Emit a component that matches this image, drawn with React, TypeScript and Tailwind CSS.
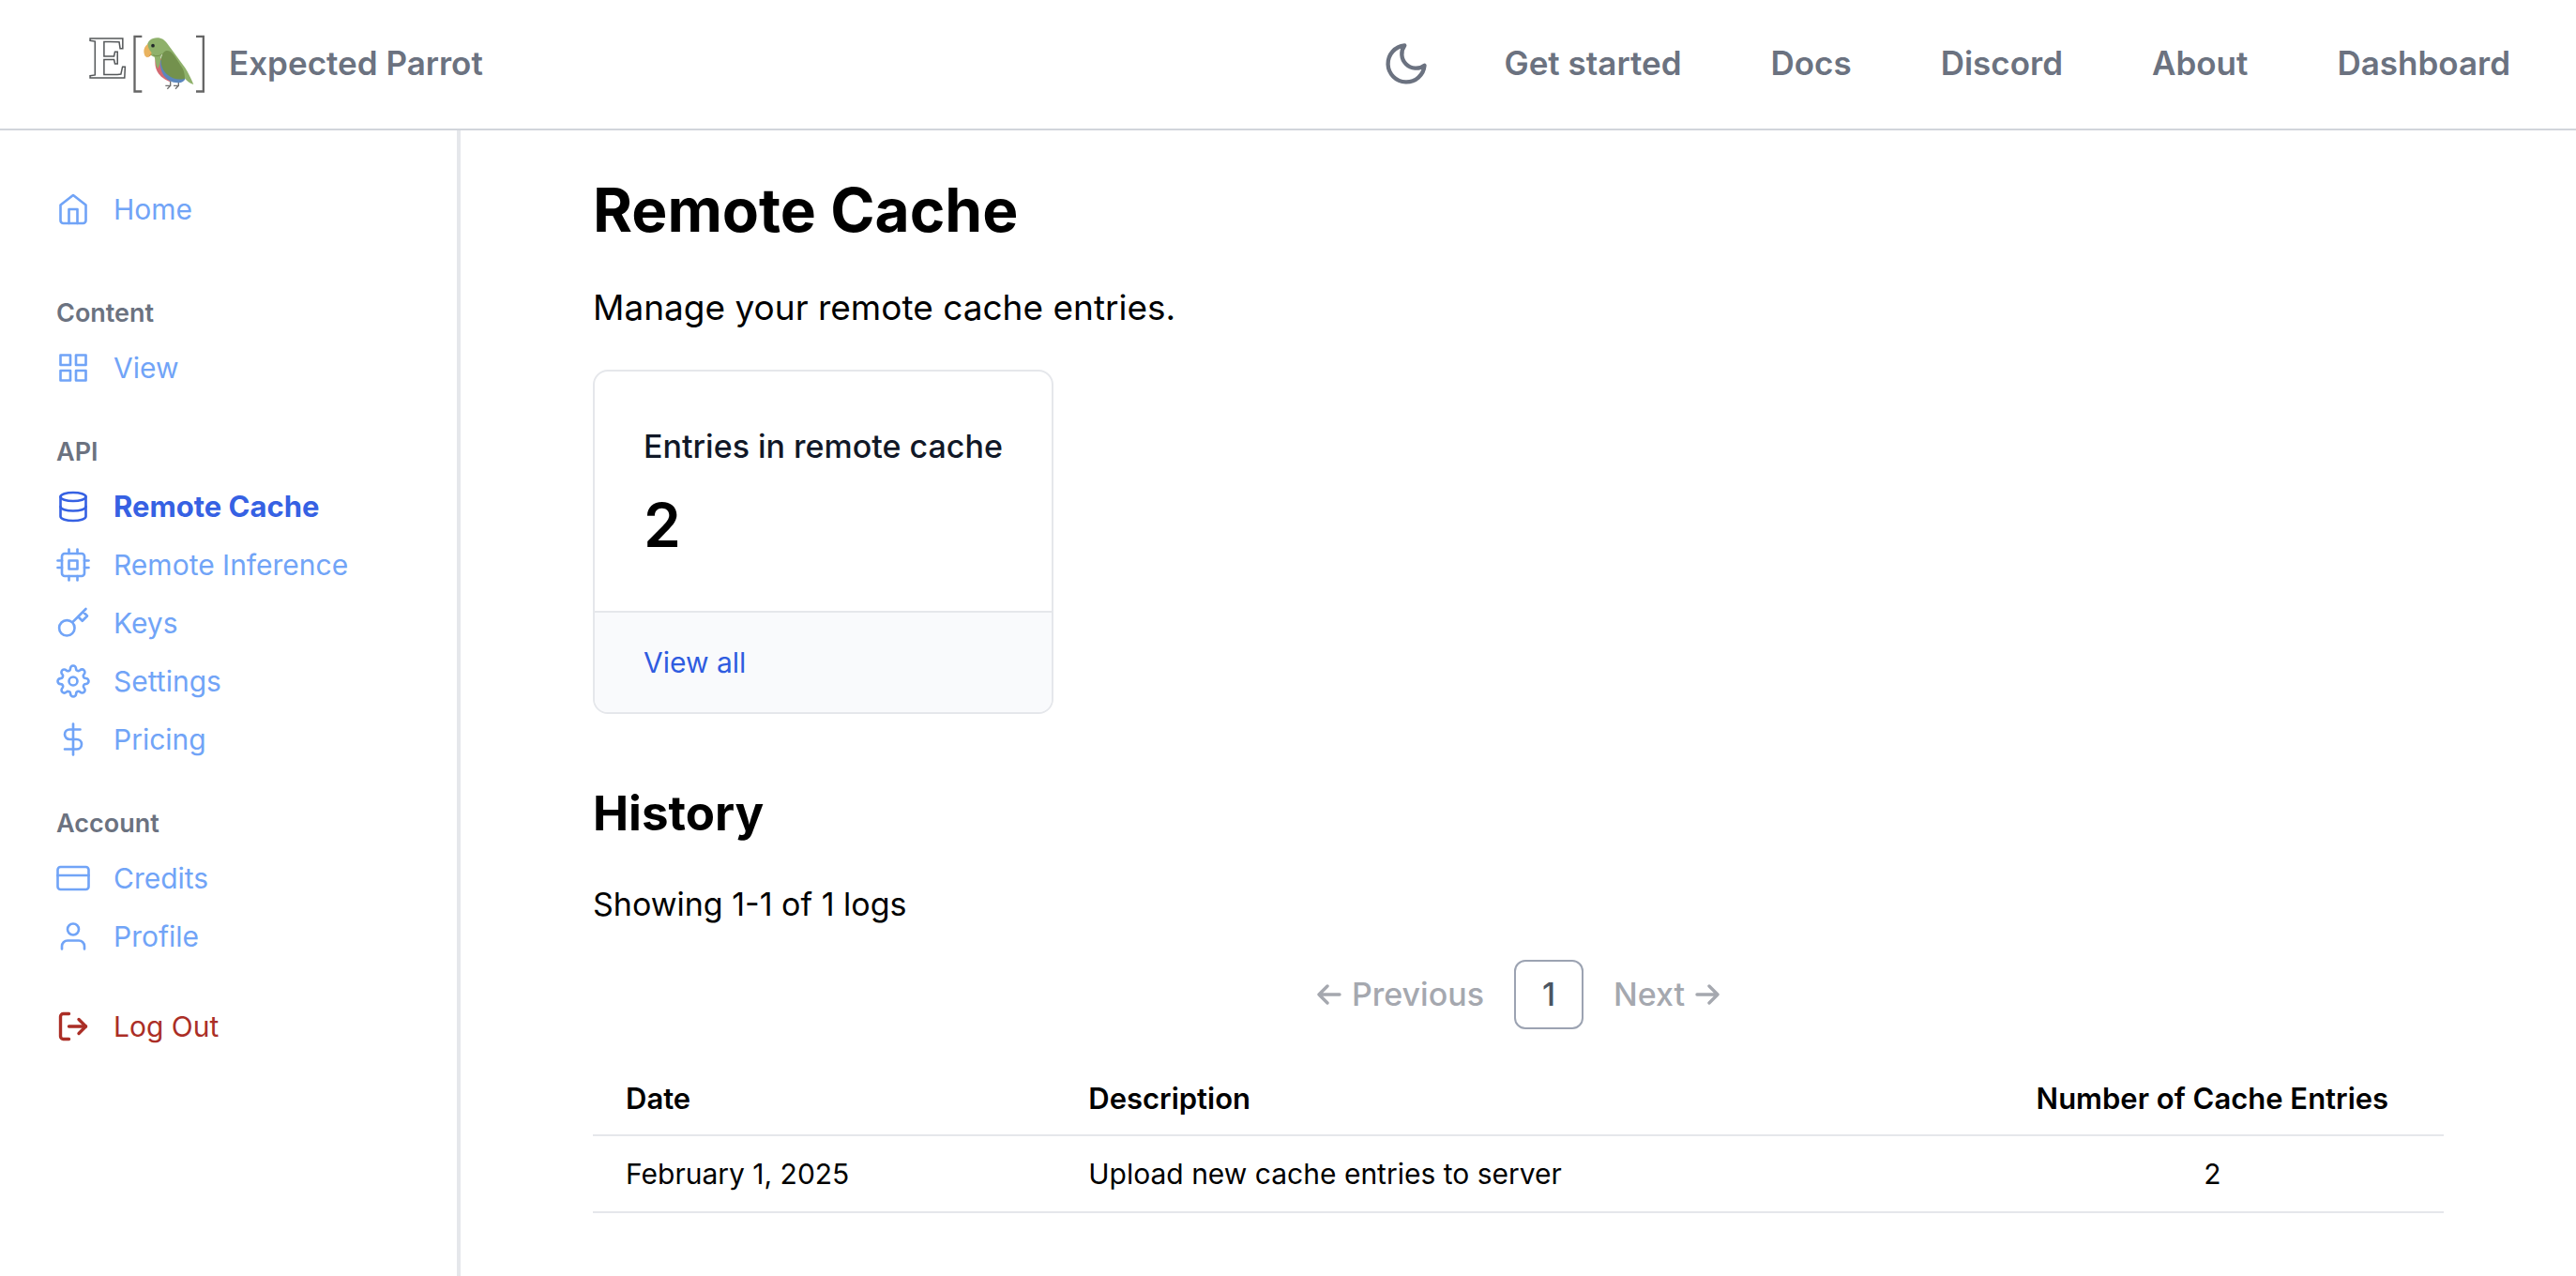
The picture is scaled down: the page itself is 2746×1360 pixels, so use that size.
import type { ReactNode } from "react";
import type { IconType } from "react-icons";
import {
  FiCpu,
  FiCreditCard,
  FiDatabase,
  FiDollarSign,
  FiGrid,
  FiHome,
  FiKey,
  FiLogOut,
  FiMoon,
  FiSettings,
  FiUser,
} from "react-icons/fi";

function Logo() {
  return (
    <svg viewBox="45 50 372 186" className="h-[62px] w-[124px] shrink-0 overflow-visible" aria-hidden="true">
      <text
        x="45"
        y="187"
        fontSize="187"
        fill="#ffffff"
        stroke="#55585a"
        strokeWidth="4.500"
        fontFamily="'Liberation Serif', serif"
      >
        E
      </text>
      <g fill="none" stroke="#666666" strokeWidth="7">
        <path d="M214 55.500H190.500V231.500H214" />
        <path d="M387 55.500H410.500V231.500H387" />
      </g>
      <g fill="none" stroke="#6f6f6f" strokeWidth="4">
        <path d="M305 198V213H289M305 213L295 223" />
        <path d="M331 198V213H315M331 213L321 223" />
      </g>
      <path d="M258 120C252 150 258 182 302 200L318 190L280 128Z" fill="#d36a72" />
      <path d="M272 132C270 165 286 204 330 204C342 204 350 198 353 190L300 130Z" fill="#5b86bd" />
      <path
        d="M230 92C229 72 244 60 262 60C278 60 286 67 294 77L352 156C362 172 371 190 379 209C368 207 358 198 350 188L276 112C273 132 272 148 264 158C257 146 258 132 254 121C243 118 231 108 230 92Z"
        fill="#8fb16b"
      />
      <path
        d="M275 134C275 115 283 102 293 101C304 100 312 108 319 119L344 158C349 168 351 180 351 190C336 196 312 192 298 180C282 167 275 152 275 134Z"
        fill="#73914d"
      />
      <path d="M250 115C258 120 270 119 277 112" fill="none" stroke="#73914d" strokeWidth="3" />
      <path d="M233 80C222 86 217 100 222 114C224 122 232 125 235 120C237 113 247 112 244 106C237 98 233 92 233 80Z" fill="#e9b35f" />
      <path d="M232 123C236 119 238 111 245 110C245 115 238 121 232 123Z" fill="#d9913f" />
      <circle cx="249" cy="85" r="5.500" fill="#22282b" />
    </svg>
  );
}

const navLinks = ["Get started", "Docs", "Discord", "About", "Dashboard"];

function Header() {
  return (
    <header className="flex items-center justify-between border-b-2 border-[#d1d5db] pt-9 pr-[70px] pb-[38px] pl-[95px] text-[35px] leading-[63px] font-semibold text-[#6b7280]">
      <a href="#home" className="flex items-center gap-[25px]">
        <Logo />
        <span>Expected Parrot</span>
      </a>
      <div className="flex items-center gap-[78px]">
        <button type="button" aria-label="Toggle dark mode">
          <FiMoon className="size-[52px]" />
        </button>
        <nav className="flex items-center gap-[95px]">
          {navLinks.map((label) => (
            <a key={label} href="#nav">
              {label}
            </a>
          ))}
        </nav>
      </div>
    </header>
  );
}

function SideLink({ icon: Icon, label, active = false }: { icon: IconType; label: string; active?: boolean }) {
  return (
    <li>
      <a
        href="#section"
        aria-current={active ? "page" : undefined}
        className={
          active
            ? "flex h-[62px] items-center gap-[25px] text-[31px] font-bold text-[#3661e3]"
            : "flex h-[62px] items-center gap-[25px] text-[30px] text-[#71a4f7]"
        }
      >
        <Icon className="size-9 shrink-0" strokeWidth={1.75} />
        {label}
      </a>
    </li>
  );
}

function SideGroup({ title, children }: { title: string; children: ReactNode }) {
  return (
    <section>
      <h2 className="mb-[9px] text-[27px] leading-9 font-semibold text-[#6b7280]">{title}</h2>
      <ul>{children}</ul>
    </section>
  );
}

function Sidebar() {
  return (
    <aside className="w-[491px] shrink-0 border-r-4 border-[#e5e7eb] pt-[53px] pr-8 pl-[60px]">
      <ul>
        <SideLink icon={FiHome} label="Home" />
      </ul>
      <div className="mt-[62px] flex flex-col gap-[41px]">
        <SideGroup title="Content">
          <SideLink icon={FiGrid} label="View" />
        </SideGroup>
        <SideGroup title="API">
          <SideLink icon={FiDatabase} label="Remote Cache" active />
          <SideLink icon={FiCpu} label="Remote Inference" />
          <SideLink icon={FiKey} label="Keys" />
          <SideLink icon={FiSettings} label="Settings" />
          <SideLink icon={FiDollarSign} label="Pricing" />
        </SideGroup>
        <SideGroup title="Account">
          <SideLink icon={FiCreditCard} label="Credits" />
          <SideLink icon={FiUser} label="Profile" />
        </SideGroup>
      </div>
      <button type="button" className="mt-[34px] flex h-[62px] items-center gap-[25px] text-[30px] text-[#ab2e26]">
        <FiLogOut className="size-9 shrink-0" strokeWidth={2.25} />
        Log Out
      </button>
    </aside>
  );
}

function Arrow({ flip = false }: { flip?: boolean }) {
  return (
    <svg
      viewBox="0 0 26 22"
      className={flip ? "h-[22px] w-[26px] -scale-x-100" : "h-[22px] w-[26px]"}
      fill="none"
      stroke="currentColor"
      strokeWidth="3.400"
      strokeLinecap="round"
      strokeLinejoin="round"
      aria-hidden="true"
    >
      <path d="M11 2L2 11L11 20M2 11H24" />
    </svg>
  );
}

function Pagination() {
  return (
    <nav
      aria-label="Pagination"
      className="mt-[35px] flex items-center justify-center gap-8 text-[34px] leading-[50px] font-medium text-[#a5a8af]"
    >
      <button type="button" disabled className="flex items-center gap-[11px]">
        <Arrow />
        Previous
      </button>
      <button
        type="button"
        aria-current="page"
        className="w-[74px] rounded-xl border-2 border-[#9ca3b2] py-[10px] text-center text-[#4b5563]"
      >
        1
      </button>
      <button type="button" disabled className="flex items-center gap-[11px]">
        Next
        <Arrow flip />
      </button>
    </nav>
  );
}

function HistoryTable() {
  return (
    <table className="mt-9 w-full table-fixed border-collapse text-[30px] leading-[44px]">
      <colgroup>
        <col className="w-1/4" />
        <col className="w-1/2" />
        <col className="w-1/4" />
      </colgroup>
      <thead>
        <tr className="border-b-2 border-[#e5e7eb] text-left text-[31px]">
          <th scope="col" className="px-[35px] py-4 font-semibold">Date</th>
          <th scope="col" className="px-[35px] py-4 font-semibold">Description</th>
          <th scope="col" className="py-4 text-center font-semibold">Number of Cache Entries</th>
        </tr>
      </thead>
      <tbody>
        <tr className="border-b-2 border-[#e5e7eb]">
          <td className="px-[35px] py-[18px]">February 1, 2025</td>
          <td className="px-[35px] py-[18px]">Upload new cache entries to server</td>
          <td className="py-[18px] text-center">2</td>
        </tr>
      </tbody>
    </table>
  );
}

export default function App() {
  return (
    <div className="flex min-h-screen flex-col bg-white font-['Inter',sans-serif] text-black">
      <Header />
      <div className="flex flex-1">
        <Sidebar />
        <main className="min-w-0 flex-1 px-[141px] pt-[45px] pb-16">
          <h1 className="text-[64px] leading-[80px] font-bold">Remote Cache</h1>
          <p className="mt-9 text-[37px] leading-[56px]">Manage your remote cache entries.</p>
          <section className="mt-[38px] w-fit overflow-hidden rounded-2xl border-2 border-[#e5e7eb]">
            <div className="px-[52px] pt-14 pb-[55px]">
              <h2 className="text-[34px] leading-[48px] font-medium text-[#111827]">Entries in remote cache</h2>
              <p className="mt-6 text-[64px] leading-[72px] font-semibold">2</p>
            </div>
            <div className="border-t-2 border-[#e5e7eb] bg-[#f9fafc] px-[52px] py-[29px] text-[30px] leading-[48px]">
              <a href="#entries" className="text-[#2f5ce0]">View all</a>
            </div>
          </section>
          <h2 className="mt-[74px] text-[51px] leading-[64px] font-bold">History</h2>
          <p className="mt-[41px] text-[34px] leading-[48px]">Showing 1-1 of 1 logs</p>
          <Pagination />
          <HistoryTable />
        </main>
      </div>
    </div>
  );
}
